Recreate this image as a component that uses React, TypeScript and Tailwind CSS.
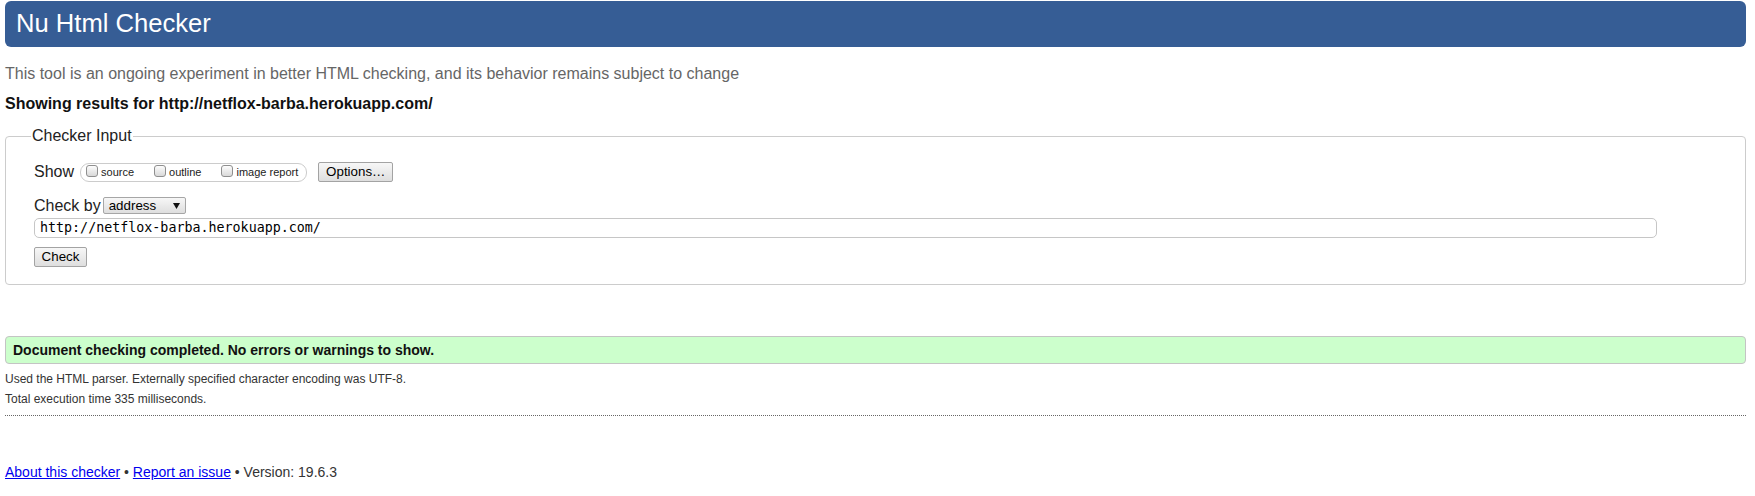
import React from "react";

function Box({ label }: { label: string }) {
  return (
    <label className="flex items-end gap-[3px]">
      <span className="mb-[2px] block h-[12px] w-[12px] rounded-[3px] border border-[#8f8f8f] bg-gradient-to-b from-[#fdfdfd] to-[#d9d9d9]" />
      <span className="text-[11px] leading-[13px] text-[#222]">{label}</span>
    </label>
  );
}

export default function App() {
  return (
    <div className="min-h-[496px] bg-white pl-[5px] pr-[9px] pt-[1px] font-['Liberation_Sans',Arial,sans-serif] text-[#222]">
      <h1 className="flex h-[46px] items-center rounded-[6px] bg-[#365d95] pl-[11px] text-[25.6px] font-normal leading-none text-white">
        Nu Html Checker
      </h1>
      <p className="mt-[18px] text-[16px] leading-[18px] text-[#666]">
        This tool is an ongoing experiment in better HTML checking, and its behavior remains subject to change
      </p>
      <p className="mt-[12px] text-[16px] font-bold leading-[18px] text-[#111]">
        Showing results for http://netflox-barba.herokuapp.com/
      </p>

      <fieldset className="mt-[14px] rounded-[4px] border border-[#cccccc] p-0">
        <legend className="ml-[25px] px-[1px] text-[16px] leading-[18px] text-[#222]">Checker Input</legend>
        <div className="pl-[28px] pt-[17px] pb-[17px]">
          <div className="flex h-[20px] items-center">
            <span className="text-[16px] leading-[18px]">Show</span>
            <div className="ml-[6px] flex h-[19px] items-center gap-[20px] rounded-[9px] border border-[#cccccc] pl-[5px] pr-[8px]">
              <Box label="source" />
              <Box label="outline" />
              <Box label="image report" />
            </div>
            <button className="ml-[11px] flex h-[20px] w-[75px] items-center justify-center rounded-[2px] border border-[#a3a3a3] bg-gradient-to-b from-[#f7f7f7] to-[#dedede] text-[13.33px] leading-none text-black">
              Options…
            </button>
          </div>

          <div className="mt-[14px] flex h-[19px] items-center">
            <span className="text-[16px] leading-[18px]">Check by</span>
            <div className="ml-[2px] flex h-[17px] w-[83px] items-center justify-between rounded-[2px] border border-[#a6a6a6] bg-gradient-to-b from-[#f7f7f7] to-[#dedede] pl-[5px] pr-[5px]">
              <span className="text-[13.33px] leading-none text-black">address</span>
              <svg width="7" height="6" viewBox="0 0 7 6">
                <path d="M0 0 L7 0 L3.5 6 Z" fill="#111" />
              </svg>
            </div>
          </div>

          <div className="mt-[3px] flex h-[20px] w-[1623px] items-center rounded-[5px] border border-[#c6c6c6] pl-[5px] font-['DejaVu_Sans_Mono',monospace] text-[13.33px] leading-none text-black">
            http://netflox-barba.herokuapp.com/
          </div>

          <button className="mt-[9px] flex h-[20px] w-[53px] items-center justify-center rounded-[2px] border border-[#a3a3a3] bg-gradient-to-b from-[#f7f7f7] to-[#dedede] text-[13.33px] leading-none text-black">
            Check
          </button>
        </div>
      </fieldset>

      <div className="mt-[51px] flex h-[28px] items-center rounded-[4px] border border-[#c4c4c4] bg-[#ccffcc] pl-[7px] text-[14px] font-bold leading-none text-[#111]">
        Document checking completed. No errors or warnings to show.
      </div>
      <p className="mt-[5px] text-[12px] leading-[20px] text-[#333]">
        Used the HTML parser. Externally specified character encoding was UTF-8.
      </p>
      <p className="text-[12px] leading-[20px] text-[#333]">Total execution time 335 milliseconds.</p>
      <div className="mt-[6px] border-t border-dotted border-[#666]" />

      <p className="mt-[48px] text-[14px] leading-[16px] text-[#333]">
        <a href="#" className="text-[#0000ee] underline">About this checker</a>
        {" • "}
        <a href="#" className="text-[#0000ee] underline">Report an issue</a>
        {" • Version: 19.6.3"}
      </p>
    </div>
  );
}
